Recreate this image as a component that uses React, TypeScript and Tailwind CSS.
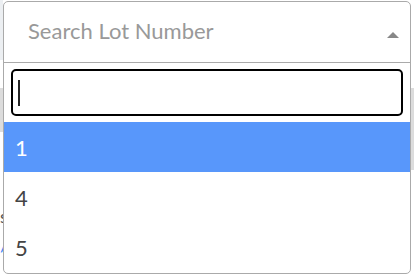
const options = ["1", "4", "5"];

const LotSelect = () => {
  return (
    <div className="absolute left-[3px] top-[1px] w-[408px] h-[273px] rounded-[5px] border border-[#aaa] bg-white overflow-hidden">
      <div className="flex h-[61px] items-center justify-between border-b border-[#aaa] pb-[3px] pl-[24px] pr-[11px]">
        <span className="text-[22px] text-[#999]">Search Lot Number</span>
        <span className="mt-[8px] h-0 w-0 border-x-[6px] border-b-[6px] border-x-transparent border-b-[#888]" />
      </div>
      <div className="px-[7px] py-[6px]">
        <div className="flex h-[47px] items-center rounded-[5px] border-2 border-black pl-[5px]">
          <span className="h-[26px] w-[2px] bg-[#222]" />
        </div>
      </div>
      <ul>
        {options.map((opt, i) => (
          <li
            key={opt}
            className={
              i === 0
                ? "flex h-[50px] items-center bg-[#5897fb] pl-[11px] text-[22px] text-white"
                : "flex h-[50px] items-center pl-[11px] text-[22px] text-[#444]"
            }
          >
            {opt}
          </li>
        ))}
      </ul>
    </div>
  );
};

export default function App() {
  return (
    <div
      className="relative flex h-[275px] w-[414px] justify-between overflow-hidden bg-white"
      style={{ fontFamily: "Lato, 'Liberation Sans', sans-serif" }}
    >
      {/* page behind the dropdown, only its edges peek out */}
      <div className="flex w-[3px] flex-col overflow-hidden">
        <div className="h-[60px] bg-[#eceff2]" />
        <div className="h-[28px]" />
        <div className="h-[44px] bg-[#dcdcdc]" />
        <div className="h-[64px]" />
        <div className="text-[18px] leading-[40px] text-[#555]">s</div>
        <div className="text-[18px] leading-none text-[#3b82f6]">/</div>
      </div>
      <div className="flex w-[3px] flex-col">
        <div className="h-[88px]" />
        <div className="h-[82px] bg-[#dcdcdc]" />
      </div>
      <LotSelect />
    </div>
  );
}
